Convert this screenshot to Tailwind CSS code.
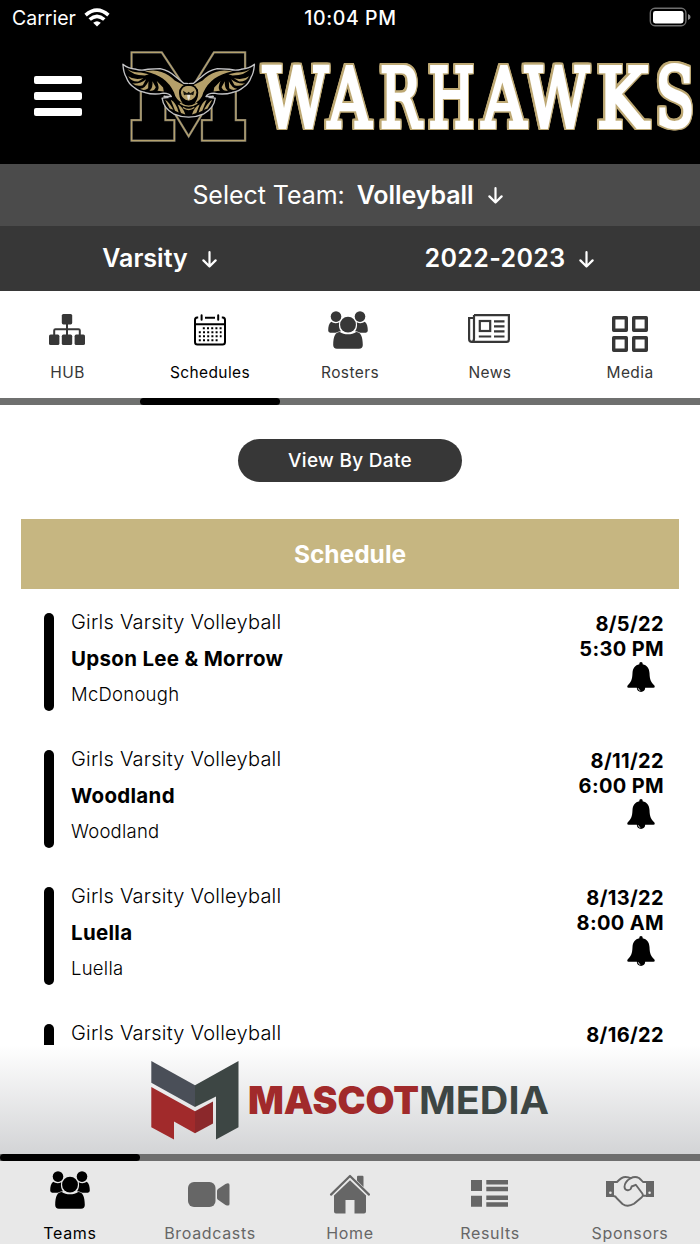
<!DOCTYPE html>
<html lang="en">
<head>
    <meta charset="UTF-8">
    <meta name="viewport" content="width=device-width, initial-scale=1.0">
    <title>Warhawks - Schedules</title>
    <script src="https://cdn.jsdelivr.net/npm/@tailwindcss/browser@4"></script>
</head>
<body class="flex flex-col w-[700px] h-[1244px] overflow-hidden bg-white font-[Inter,sans-serif]">
    <!-- Shared icons -->
    <svg class="hidden">
        <symbol id="people" viewBox="0 0 40 38">
            <g fill="currentColor">
                <circle cx="8" cy="5.6" r="5.3"/>
                <circle cx="32" cy="5.6" r="5.3"/>
                <circle cx="20" cy="13.7" r="7.9"/>
                <path d="M3.2 10.8C5.5 12.6 9 12.6 11.2 11.2C10.5 15 11.2 18 13 20.2C10 20.6 8.5 21.3 7.5 21.7H2.2Q.2 21.7.2 19.6C.2 15.5 1 12.3 3.2 10.8Z"/>
                <path d="M36.8 10.8C34.5 12.6 31 12.6 28.8 11.2C29.5 15 28.8 18 27 20.2C30 20.6 31.5 21.3 32.5 21.7H37.8Q39.8 21.7 39.8 19.6C39.8 15.5 39 12.3 36.8 10.8Z"/>
                <path d="M11.8 20.9C16 24 24 24 28.2 20.9C32.5 21 34.8 25 34.8 34Q34.8 37.7 31 37.7H9Q5.2 37.7 5.2 34C5.2 25 7.5 21 11.8 20.9Z"/>
            </g>
        </symbol>
        <symbol id="bell" viewBox="0 0 28 30">
            <path fill="currentColor" d="M14 0C15.3 0 15.8 1 15.6 2.2C20 3 22.3 6.4 22.5 11C22.8 17.5 23.6 19.8 27.2 23.2Q28.6 25.6 26.4 25.8H18.2C18.2 28.4 16.4 29.9 14 29.9S9.8 28.4 9.8 25.8H1.6Q-.6 25.6.8 23.2C4.4 19.8 5.2 17.5 5.5 11C5.7 6.4 8 3 12.4 2.2C12.2 1 12.7 0 14 0Z"/>
            <path fill="none" stroke="#fff" stroke-width=".8" d="M11.2 26.2Q11.5 28 13.3 28.6"/>
        </symbol>
        <symbol id="arrow" viewBox="0 0 15 17">
            <path fill="none" stroke="currentColor" stroke-width="2.2" stroke-linecap="round" stroke-linejoin="round" d="M7.5 1.2V15.4M1.4 9.4L7.5 15.5L13.6 9.4"/>
        </symbol>
    </svg>

    <!-- Status bar -->
    <div class="grid grid-cols-3 items-center h-9 pl-3 pr-[9px] bg-black text-white text-[19.5px] leading-9 shrink-0">
        <div class="flex items-center gap-2">
            <span>Carrier</span>
            <svg class="w-[26px] h-[19px] -mt-[2px]" viewBox="0 0 26 19">
                <g fill="none" stroke="#fff" stroke-width="3.6">
                    <path d="M1.6 7.2Q13-2.8 24.4 7.2"/>
                    <path d="M5.7 11.5Q13 5.1 20.3 11.5"/>
                </g>
                <path fill="#fff" d="M13 18.6L9.2 14.8Q13 11.6 16.8 14.8Z"/>
            </svg>
        </div>
        <span class="pr-[2px] text-center font-medium tracking-[0.6px] whitespace-nowrap">10:04 PM</span>
        <svg class="w-[42px] h-5 justify-self-end -mt-[2px]" viewBox="0 0 42 20">
            <rect x="1.3" y="1.3" width="35.6" height="17.4" rx="4.6" fill="none" stroke="#6e6e6e" stroke-width="1.4"/>
            <rect x="4" y="4" width="30.5" height="12.4" rx="2.4" fill="#fff"/>
            <path fill="#8a8a8a" d="M39 7Q41.6 8.2 41.6 10T39 13Z"/>
        </svg>
    </div>

    <!-- Header -->
    <header class="flex items-start h-32 bg-black shrink-0">
        <div class="flex flex-col gap-2 mt-10 ml-[34px] w-12">
            <span class="h-2 rounded-xs bg-white"></span>
            <span class="h-2 rounded-xs bg-white"></span>
            <span class="h-2 rounded-xs bg-white"></span>
        </div>
        <svg class="w-[135px] h-[93px] mt-[14px] ml-[39px] shrink-0" viewBox="33 30 405 280">
            <path fill="#000" stroke="#77736a" stroke-width="7" d="M64 37H155L236 160L312 37H406V98H378V241H406V303H276V241H305V175L236 290L166 175V241H193V303H64V241H92V98H64Z"/>
            <path fill="none" stroke="#b5a26d" stroke-width="3.5" d="M64 37H155L236 160L312 37H406V98H378V241H406V303H276V241H305V175L236 290L166 175V241H193V303H64V241H92V98H64Z"/>
            <path fill="#000" stroke="#c4c4c6" stroke-width="4" stroke-linejoin="round" d="M156 175Q160 205 190 222Q236 242 282 222Q312 205 316 175L285 172L236 150L187 172Z"/>
            <g id="wing">
                <path fill="#000" d="M150 86Q178 92 196 110L221 130L236 131V222Q206 220 185 178L160 164Z"/>
                <path fill="#000" stroke="#c4c4c6" stroke-width="4" stroke-linejoin="round" d="M236 131L221 130L196 110Q178 92 150 86L114 88Q95 93 78 88Q52 86 38 73Q40 100 48 112Q55 132 72 143Q84 154 105 158Q130 166 160 160Q178 160 184 170L160 170"/>
                <g fill="#b5a06a">
                    <path d="M50 86Q62 98 92 98L116 103L104 107Q64 106 50 86Z"/>
                    <path d="M104 94Q136 88 154 96Q178 104 194 122L222 136L208 150Q204 172 218 191Q196 178 192 158Q180 132 158 116Q140 103 104 94Z"/>
                    <path d="M54 109Q72 122 100 115L84 125Q64 126 54 109ZM66 130Q86 135 108 118L98 136Q80 142 66 130ZM90 147Q105 146 115 124L114 145Q103 154 90 147ZM118 152Q129 145 127 124L137 142Q132 155 118 152ZM142 153Q150 145 140 123L159 143L161 155Z"/>
                    <path d="M165 180Q178 188 190 210L179 206ZM182 180Q198 188 206 218L195 213ZM203 194Q218 200 226 224L213 220Z"/>
                </g>
            </g>
            <use href="#wing" transform="matrix(-1 0 0 1 472 0)"/>
            <path fill="#b5a06a" stroke="#000" stroke-width="5" d="M236 135Q260 136 262 158Q260 180 236 185Q212 180 210 158Q212 136 236 135Z"/>
            <path fill="#15130c" d="M219 153L231 160L236 156L241 160L253 153L250 166L243 164L236 170L229 164L222 166Z"/>
            <path fill="#e8e4da" d="M231 165H241L239 176L236 181L233 176Z"/>
            <path fill="none" stroke="#b5a06a" stroke-width="4" d="M210 190Q236 208 262 190M219 203Q236 215 253 203"/>
        </svg>
        <svg class="w-[443px] h-[120px] ml-px shrink-0 [filter:drop-shadow(1.5px_0_#bda873)_drop-shadow(-1.5px_0_#bda873)_drop-shadow(0_1.5px_#bda873)_drop-shadow(0_-1.5px_#bda873)]" viewBox="257 36 443 120">
            <text y="126.5" class="font-['DejaVu_Serif'] text-[82px]" fill="#fff" stroke="#fff" stroke-width="4" stroke-linejoin="miter"><tspan x="263" textLength="65" lengthAdjust="spacingAndGlyphs">W</tspan><tspan x="328" textLength="43" lengthAdjust="spacingAndGlyphs">A</tspan><tspan x="380" textLength="41" lengthAdjust="spacingAndGlyphs">R</tspan><tspan x="428.5" textLength="46" lengthAdjust="spacingAndGlyphs">H</tspan><tspan x="482" textLength="44" lengthAdjust="spacingAndGlyphs">A</tspan><tspan x="525" textLength="64" lengthAdjust="spacingAndGlyphs">W</tspan><tspan x="597" textLength="51" lengthAdjust="spacingAndGlyphs">K</tspan><tspan x="655.5" textLength="39" lengthAdjust="spacingAndGlyphs">S</tspan></text>
        </svg>
    </header>

    <!-- Team, level and season pickers -->
    <div class="flex justify-center items-center h-[62px] pt-px pr-[5px] bg-[#4b4b4b] text-white text-[25px] shrink-0">
        <span class="tracking-[-0.05px]">Select Team:</span>
        <span class="ml-3 font-semibold tracking-[-0.05px]">Volleyball</span>
        <svg class="w-[15px] h-[17px] ml-[14px]"><use href="#arrow"/></svg>
    </div>
    <div class="flex h-[65px] pt-px bg-[#373737] text-white text-[25px] font-semibold shrink-0">
        <div class="flex items-center w-[320px] pr-px justify-center">
            <span>Varsity</span>
            <svg class="w-[15px] h-[17px] ml-[14px]"><use href="#arrow"/></svg>
        </div>
        <div class="flex items-center w-[380px] pr-px justify-center">
            <span class="tracking-[0.35px]">2022-2023</span>
            <svg class="w-[15px] h-[17px] ml-[14px]"><use href="#arrow"/></svg>
        </div>
    </div>

    <!-- Section tabs -->
    <nav class="grid grid-cols-5 h-[107px] text-[#373737] text-[15.5px] leading-[26px] tracking-[0.4px] shrink-0">
        <div class="flex flex-col items-center pr-[5px]">
            <svg class="w-9 h-[31px] mt-[23px] mr-px" viewBox="0 0 36 31">
                <g fill="currentColor">
                    <rect x="12.8" width="10.4" height="10.4" rx="1.6"/>
                    <rect y="20.6" width="10.4" height="10.4" rx="1.6"/>
                    <rect x="12.8" y="20.6" width="10.4" height="10.4" rx="1.6"/>
                    <rect x="25.6" y="20.6" width="10.4" height="10.4" rx="1.6"/>
                </g>
                <path fill="none" stroke="currentColor" stroke-width="2" d="M18 9V22M5.2 22V16.5Q5.2 15.2 6.5 15.2H29.5Q30.8 15.2 30.8 16.5V22"/>
            </svg>
            <span class="mt-[15px]">HUB</span>
        </div>
        <div class="flex flex-col items-center text-black">
            <svg class="w-8 h-8 mt-[23px]" viewBox="0 0 32 32">
                <g fill="none" stroke="currentColor" stroke-width="2">
                    <path d="M4.2 3.6H3.2Q1 3.8 1 6V28Q1 30.6 3.4 30.6H28.6Q31 30.6 31 28V6Q31 3.8 28.8 3.6H27.8M11 3.7H21M1 10.2H31"/>
                    <path stroke-linecap="round" d="M7.6 1.2V5.8M24.2 1.2V5.8"/>
                </g>
                <g fill="none" stroke="currentColor" stroke-width="2" stroke-dasharray="2 2.2">
                    <path d="M8.8 14.2H27.6M4.8 18.2H27.6M4.8 22.3H27.6M4.8 26.3H23.6"/>
                </g>
            </svg>
            <span class="mt-[14px]">Schedules</span>
        </div>
        <div class="flex flex-col items-center">
            <svg class="w-10 h-[38px] mt-5 mr-1"><use href="#people"/></svg>
            <span class="mt-[11px]">Rosters</span>
        </div>
        <div class="flex flex-col items-center">
            <svg class="w-[42px] h-[29px] mt-[23px] mr-[2px]" viewBox="0 0 42 29">
                <g fill="none" stroke="currentColor" stroke-width="2.2">
                    <path d="M6 1.1H40.9V25.5Q40.9 27.9 38.5 27.9H3.8Q1.1 27.9 1.1 25V4H6M6 1V24.5Q6 28 3.5 28"/>
                    <rect x="11.8" y="7" width="10.4" height="10"/>
                    <path d="M26 7.3H36.5M26 12.3H36.5M26 17.3H36.5M10.8 22.5H23.2M26 22.5H36.5"/>
                </g>
            </svg>
            <span class="mt-[17px]">News</span>
        </div>
        <div class="flex flex-col items-center">
            <svg class="w-9 h-9 mt-[25px]" viewBox="0 0 36 36">
                <g fill="none" stroke="currentColor" stroke-width="3.4" stroke-linejoin="round">
                    <rect x="1.7" y="1.7" width="12.6" height="12.6"/>
                    <rect x="21.7" y="1.7" width="12.6" height="12.6"/>
                    <rect x="1.7" y="21.7" width="12.6" height="12.6"/>
                    <rect x="21.7" y="21.7" width="12.6" height="12.6"/>
                </g>
            </svg>
            <span class="mt-2">Media</span>
        </div>
    </nav>
    <div class="h-[7px] bg-[#6f706f] shrink-0">
        <div class="w-[140px] h-[7px] ml-[140px] rounded-full bg-black"></div>
    </div>

    <!-- Schedule list -->
    <main class="h-[640px] overflow-hidden shrink-0">
        <button class="block w-56 h-[43px] mt-[34px] mx-auto pt-[2px] rounded-full bg-[#373737] text-white text-[19px] font-medium tracking-[0.3px]">View By Date</button>
        <h1 class="h-[70px] mt-[37px] mx-[21px] bg-[#c6b681] text-white text-[24.5px] leading-[71px] font-bold text-center">Schedule</h1>

        <div class="flex h-[98px] mt-6 pl-11 pr-9">
            <div class="w-[10px] rounded-full bg-black"></div>
            <div class="ml-[17px] -mt-[9px] leading-9">
                <p class="text-[20px] font-light tracking-[0.23px]">Girls Varsity Volleyball</p>
                <p class="pt-px -mb-px text-[20.5px] font-bold tracking-[0.3px]">Upson Lee &amp; Morrow</p>
                <p class="text-[18.5px] font-light tracking-[0.25px]">McDonough</p>
            </div>
            <div class="flex flex-col items-end ml-auto -mt-px text-[20px] leading-[25px] font-bold tracking-[0.35px]">
                <p>8/5/22</p>
                <p>5:30 PM</p>
                <svg class="w-7 h-[30px] mr-[9px]"><use href="#bell"/></svg>
            </div>
        </div>

        <div class="flex h-[98px] mt-[39px] pl-11 pr-9">
            <div class="w-[10px] rounded-full bg-black"></div>
            <div class="ml-[17px] -mt-[9px] leading-9">
                <p class="text-[20px] font-light tracking-[0.23px]">Girls Varsity Volleyball</p>
                <p class="pt-px -mb-px text-[20.5px] font-bold tracking-[0.3px]">Woodland</p>
                <p class="text-[18.5px] font-light tracking-[0.25px]">Woodland</p>
            </div>
            <div class="flex flex-col items-end ml-auto -mt-px text-[20px] leading-[25px] font-bold tracking-[0.35px]">
                <p>8/11/22</p>
                <p>6:00 PM</p>
                <svg class="w-7 h-[30px] mr-[9px]"><use href="#bell"/></svg>
            </div>
        </div>

        <div class="flex h-[98px] mt-[39px] pl-11 pr-9">
            <div class="w-[10px] rounded-full bg-black"></div>
            <div class="ml-[17px] -mt-[9px] leading-9">
                <p class="text-[20px] font-light tracking-[0.23px]">Girls Varsity Volleyball</p>
                <p class="pt-px -mb-px text-[20.5px] font-bold tracking-[0.3px]">Luella</p>
                <p class="text-[18.5px] font-light tracking-[0.25px]">Luella</p>
            </div>
            <div class="flex flex-col items-end ml-auto -mt-px text-[20px] leading-[25px] font-bold tracking-[0.35px]">
                <p>8/13/22</p>
                <p>8:00 AM</p>
                <svg class="w-7 h-[30px] mr-[9px]"><use href="#bell"/></svg>
            </div>
        </div>

        <div class="flex h-[98px] mt-[39px] pl-11 pr-9">
            <div class="w-[10px] rounded-full bg-black"></div>
            <div class="ml-[17px] -mt-[9px] leading-9">
                <p class="text-[20px] font-light tracking-[0.23px]">Girls Varsity Volleyball</p>
            </div>
            <div class="ml-auto -mt-px text-[20px] leading-[25px] font-bold tracking-[0.35px]">
                <p>8/16/22</p>
            </div>
        </div>
    </main>

    <!-- Sponsor banner -->
    <div class="h-[109px] bg-linear-to-b from-white to-[#d3d4d6] shrink-0">
        <svg class="w-[400px] h-[82px] ml-[150px] mt-[14px]" viewBox="150 1059 400 82">
            <path fill="#4a4f58" d="M151.3 1061L195 1085.3V1107L151.3 1082.7Z"/>
            <path fill="#3d4644" d="M238.5 1061V1127.3L216 1139.5V1096.5L195 1107V1085.3Z"/>
            <path fill="#a12a2b" d="M151.3 1087L195 1111.3V1133.3L174 1121.5V1139.5L151.3 1127.3Z"/>
            <path fill="#8b282b" d="M195 1111.3L213 1101.5V1123.5L195 1133.3Z"/>
            <text x="248" y="1114" textLength="171" lengthAdjust="spacingAndGlyphs" class="font-[Inter] font-black text-[38px]" fill="#a12a2b">MASCOT</text>
            <text x="419" y="1114" textLength="130" lengthAdjust="spacingAndGlyphs" class="font-[Inter] font-bold text-[38px]" fill="#3d4644">MEDIA</text>
        </svg>
    </div>

    <!-- Bottom navigation -->
    <div class="h-[7px] bg-[#6e6e6e] shrink-0">
        <div class="w-[140px] h-[7px] rounded-full bg-black"></div>
    </div>
    <nav class="grid grid-cols-5 h-[83px] bg-[#e8e8e8] text-[#666] text-base leading-6 tracking-[0.65px] shrink-0">
        <div class="flex flex-col items-center text-black">
            <svg class="w-10 h-[38px] mt-[10px]"><use href="#people"/></svg>
            <span class="mt-[12px]">Teams</span>
        </div>
        <div class="flex flex-col items-center">
            <svg class="w-[42px] h-[25px] mt-[21px] -ml-[2px]" viewBox="0 0 42 25">
                <rect width="27.5" height="25" rx="6" fill="currentColor"/>
                <path fill="currentColor" d="M29 9Q29 7.8 30 7L37.5 2Q41.5.2 41.5 3V22Q41.5 24.6 37.5 23L30 17.8Q29 17 29 16Z"/>
            </svg>
            <span class="mt-[14px]">Broadcasts</span>
        </div>
        <div class="flex flex-col items-center">
            <svg class="w-[42px] h-10 mt-[13px]" viewBox="0 0 42 40">
                <path fill="none" stroke="currentColor" stroke-width="2.2" stroke-linecap="round" stroke-linejoin="round" d="M2 20.6L21 2L40 20.6"/>
                <path fill="currentColor" d="M28 3Q28 1.8 29 1.8H33.5Q34.5 1.8 34.5 3V13L28 6.6ZM21 6.2L37 21.5V37.5Q37 39.6 35 39.6H25.5V26H16.5V39.6H7Q5 39.6 5 37.5V21.5Z"/>
            </svg>
            <span class="mt-[7px]">Home</span>
        </div>
        <div class="flex flex-col items-center">
            <svg class="w-[37px] h-[27px] mt-[19px] mr-[2px]" viewBox="0 0 37 27">
                <path fill="currentColor" d="M0 0H11V11H0ZM0 15.8H11V26.8H0ZM15.3 0H37V4.6H15.3ZM15.3 6.7H37V11.3H15.3ZM15.3 15.5H37V20.1H15.3ZM15.3 22.2H37V26.8H15.3Z"/>
            </svg>
            <span class="mt-[14px]">Results</span>
        </div>
        <div class="flex flex-col items-center">
            <svg class="w-12 h-[31px] mt-[15px]" viewBox="0 0 48 31">
                <path fill="currentColor" fill-rule="evenodd" d="M0 5H8V21H0ZM4.4 15.4A1.3 1.3 0 1 0 4.4 18A1.3 1.3 0 1 0 4.4 15.4ZM40 5H48V21H40ZM43.6 15.4A1.3 1.3 0 1 0 43.6 18A1.3 1.3 0 1 0 43.6 15.4Z"/>
                <g fill="none" stroke="currentColor" stroke-width="1.9" stroke-linecap="round" stroke-linejoin="round">
                    <path d="M7.5 6H11Q15.5 1 19.5 1Q23 1 24.5 2.3Q29-.2 33 2Q35.5 4.2 37 6H40.5"/>
                    <path d="M24.5 2.3Q18.5 6 18.5 11Q18.8 14.4 22 14.2Q25.2 13.8 25.6 10.5L29.8 8.8L36.5 17.8Q37.5 20 35.5 21.5L28 27.8Q21.5 31.6 16.5 28L10.5 22Q10 20.3 7.5 20M37 19.8H40.5"/>
                </g>
            </svg>
            <span class="mt-[14px]">Sponsors</span>
        </div>
    </nav>
</body>
</html>
